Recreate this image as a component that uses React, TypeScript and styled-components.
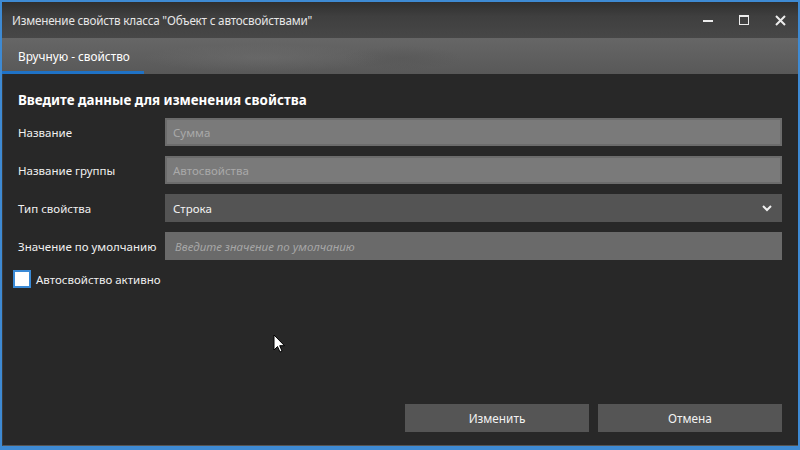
import React from 'react';
import styled, { createGlobalStyle } from 'styled-components';

const GlobalStyle = createGlobalStyle`
    html, body {
        margin: 0;
        padding: 0;
        background: #282828;
    }
    * {
        box-sizing: border-box;
    }
`;

const Window = styled.div`
    position: relative;
    width: 800px;
    height: 450px;
    display: flex;
    flex-direction: column;
    border: 2px solid #3e8ad3;
    border-bottom-width: 4px;
    background: #282828;
    font-family: 'Noto Sans', 'Open Sans', sans-serif;
    color: #f0f0f0;
    overflow: hidden;
`;

const TitleBar = styled.div`
    height: 36px;
    flex: none;
    display: flex;
    align-items: center;
    padding-left: 10px;
    background: linear-gradient(to bottom, #2f2f2f 0%, #3f3f3f 40%, #474747 100%);
`;

const Title = styled.div`
    flex: 1;
    font-size: 11.7px;
    color: #e6e6e6;
    letter-spacing: -0.2px;
`;

const WinButton = styled.div`
    width: 36px;
    height: 36px;
    display: flex;
    align-items: center;
    justify-content: center;
`;

const TabBar = styled.div`
    height: 36px;
    flex: none;
    display: flex;
    align-items: stretch;
    background:
        radial-gradient(ellipse 120px 14px at 260px 20px, rgba(120, 120, 120, 0.35), transparent),
        radial-gradient(ellipse 60px 12px at 400px 20px, rgba(80, 80, 80, 0.35), transparent),
        linear-gradient(to bottom, #666666 0%, #5e5e5e 60%, #585858 100%);
`;

const Tab = styled.div<{ $active?: boolean }>`
    width: 142px;
    display: flex;
    align-items: center;
    padding-left: 16px;
    font-size: 11.8px;
    color: #ffffff;
    border-bottom: 3px solid ${(p) => (p.$active ? '#1f72c6' : 'transparent')};
    padding-top: 2px;
`;

const Content = styled.div`
    flex: 1;
    display: flex;
    flex-direction: column;
    padding: 16px 16px 13px 16px;
    border-left: 1px solid #3a3a3a;
    border-bottom: 1px solid #555;
`;

const Heading = styled.div`
    font-size: 13.4px;
    font-weight: 700;
    color: #ffffff;
    line-height: 20px;
    margin-bottom: 8px;
    margin-left: -1px;
`;

const Form = styled.div`
    display: grid;
    grid-template-columns: 147px 1fr;
    row-gap: 10px;
    margin-left: -1px;
`;

const Label = styled.label`
    display: flex;
    align-items: center;
    font-size: 11.5px;
    color: #f0f0f0;
    height: 28px;
`;

const Field = styled.div<{ $bg: string; $border?: string }>`
    height: 28px;
    display: flex;
    align-items: center;
    padding: 0 8px 0 6px;
    background: ${(p) => p.$bg};
    border: 2px solid ${(p) => p.$border ?? p.$bg};
    font-size: 11.5px;
`;

const FieldText = styled.span<{ $color: string; $italic?: boolean }>`
    flex: 1;
    color: ${(p) => p.$color};
    font-style: ${(p) => (p.$italic ? 'italic' : 'normal')};
    padding-left: ${(p) => (p.$italic ? '2px' : '0')};
`;

const CheckRow = styled.div`
    display: flex;
    align-items: center;
    gap: 5px;
    margin-top: 10px;
    margin-left: -6px;
    font-size: 11.5px;
    color: #f0f0f0;
`;

const Checkbox = styled.div`
    width: 18px;
    height: 18px;
    background: #ffffff;
    border: 2px solid #3a8ad6;
`;

const Spacer = styled.div`
    flex: 1;
`;

const Buttons = styled.div`
    display: flex;
    justify-content: flex-end;
    gap: 9px;
`;

const Button = styled.button`
    width: 184px;
    height: 28px;
    border: none;
    background: #555555;
    color: #f2f2f2;
    font-family: 'Noto Sans', 'Open Sans', sans-serif;
    font-size: 11.8px;
    padding: 0;
`;

const Cursor = styled.svg`
    position: absolute;
    left: 271px;
    top: 332px;
`;

const App: React.FC = () => {
    return (
        <>
            <GlobalStyle />
            <Window>
                <TitleBar>
                    <Title>Изменение свойств класса "Объект с автосвойствами"</Title>
                    <WinButton>
                        <svg width="10" height="10" viewBox="0 0 10 10">
                            <rect x="0" y="5" width="10" height="2" fill="#ececec" />
                        </svg>
                    </WinButton>
                    <WinButton>
                        <svg width="10" height="10" viewBox="0 0 10 10">
                            <rect x="0.5" y="0.5" width="9" height="9" fill="none" stroke="#ececec" />
                            <rect x="0" y="0" width="10" height="2" fill="#ececec" />
                        </svg>
                    </WinButton>
                    <WinButton>
                        <svg width="11" height="11" viewBox="0 0 11 11">
                            <path d="M1 1 L10 10 M10 1 L1 10" stroke="#ececec" strokeWidth="2" />
                        </svg>
                    </WinButton>
                </TitleBar>
                <TabBar>
                    <Tab $active>Вручную - свойство</Tab>
                </TabBar>
                <Content>
                    <Heading>Введите данные для изменения свойства</Heading>
                    <Form>
                        <Label>Название</Label>
                        <Field $bg="#7a7a7a" $border="#6c6c6c">
                            <FieldText $color="#a9a9a9">Сумма</FieldText>
                        </Field>
                        <Label>Название группы</Label>
                        <Field $bg="#7a7a7a" $border="#6c6c6c">
                            <FieldText $color="#a9a9a9">Автосвойства</FieldText>
                        </Field>
                        <Label>Тип свойства</Label>
                        <Field $bg="#545454">
                            <FieldText $color="#f2f2f2">Строка</FieldText>
                            <svg width="10" height="7" viewBox="0 0 10 7">
                                <path d="M1 1 L5 5 L9 1" fill="none" stroke="#f0f0f0" strokeWidth="2" />
                            </svg>
                        </Field>
                        <Label>Значение по умолчанию</Label>
                        <Field $bg="#6a6a6a">
                            <FieldText $color="#a6a6a6" $italic>
                                Введите значение по умолчанию
                            </FieldText>
                        </Field>
                    </Form>
                    <CheckRow>
                        <Checkbox />
                        <span>Автосвойство активно</span>
                    </CheckRow>
                    <Spacer />
                    <Buttons>
                        <Button>Изменить</Button>
                        <Button>Отмена</Button>
                    </Buttons>
                </Content>
                <Cursor width="13" height="20" viewBox="0 0 13 20">
                    <path
                        d="M1 1 L1 16 L4.5 12.5 L7 18 L9 17 L6.7 11.7 L11.5 11.7 Z"
                        fill="#ffffff"
                        stroke="#000000"
                        strokeWidth="1"
                        strokeLinejoin="round"
                    />
                </Cursor>
            </Window>
        </>
    );
};

export default App;
